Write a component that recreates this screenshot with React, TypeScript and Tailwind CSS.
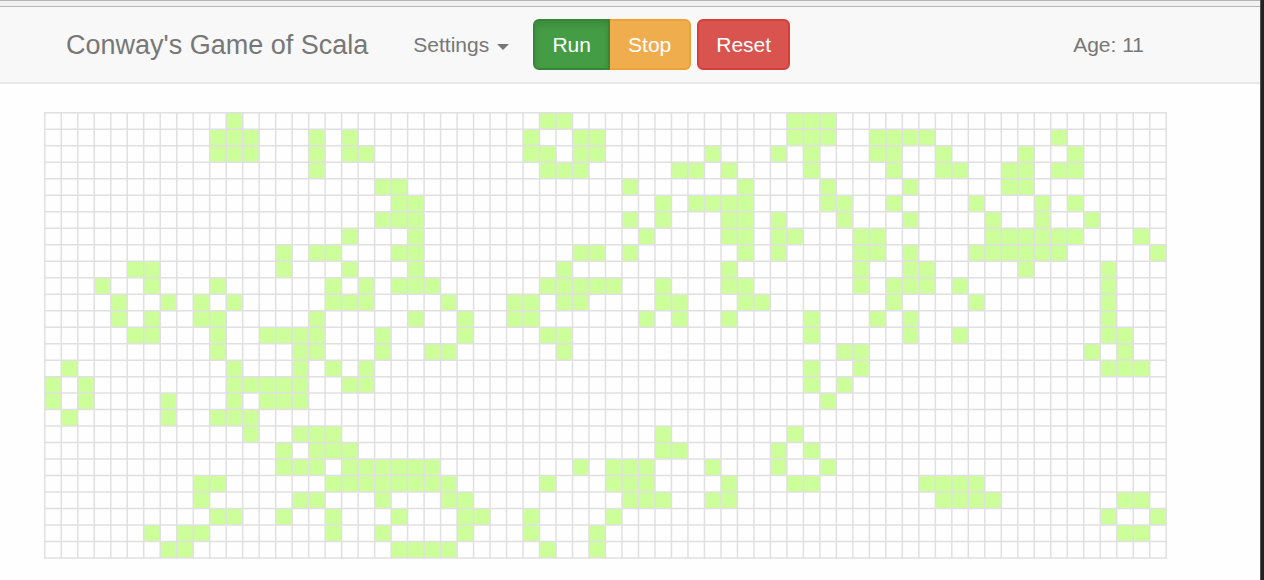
const COLS = 68;
const ROWS = 27;
const CELL = 11;

// Column numbers of the living cells, one entry per row of the board.
const LIVING: number[][] = [
  [11, 30, 31, 45, 46, 47],
  [10, 11, 12, 16, 18, 29, 32, 33, 45, 46, 47, 50, 51, 52, 53, 61],
  [10, 11, 12, 16, 18, 19, 29, 30, 32, 33, 40, 44, 46, 50, 51, 54, 59, 62],
  [16, 30, 31, 32, 38, 39, 41, 46, 51, 54, 55, 58, 59, 61, 62],
  [20, 21, 35, 42, 47, 52, 58, 59],
  [21, 22, 37, 39, 40, 41, 42, 47, 48, 51, 56, 60, 62],
  [20, 21, 22, 35, 37, 41, 42, 44, 48, 52, 57, 60, 63],
  [18, 22, 36, 41, 42, 44, 45, 49, 50, 57, 58, 59, 60, 61, 62, 66],
  [14, 16, 17, 21, 22, 32, 33, 35, 42, 44, 49, 50, 52, 56, 57, 58, 59, 60, 61, 67],
  [5, 6, 14, 18, 22, 31, 41, 49, 52, 53, 59, 64],
  [3, 6, 10, 17, 19, 21, 22, 23, 30, 31, 32, 33, 34, 37, 41, 42, 49, 51, 52, 53, 55, 64],
  [4, 7, 9, 11, 17, 18, 19, 24, 28, 29, 31, 32, 37, 38, 42, 43, 51, 56, 64],
  [4, 6, 9, 10, 16, 22, 25, 28, 29, 36, 38, 41, 46, 50, 52, 64],
  [5, 6, 10, 13, 14, 15, 16, 20, 25, 30, 31, 46, 52, 55, 64, 65],
  [10, 15, 16, 20, 23, 24, 31, 48, 49, 63, 65],
  [1, 11, 15, 17, 19, 46, 49, 64, 65, 66],
  [0, 2, 11, 12, 13, 14, 15, 18, 19, 46, 48],
  [0, 2, 7, 11, 13, 14, 15, 47],
  [1, 7, 10, 11, 12],
  [12, 15, 16, 17, 37, 45],
  [14, 16, 17, 18, 37, 38, 44, 46],
  [14, 15, 16, 18, 19, 20, 21, 22, 23, 32, 34, 35, 36, 40, 44, 47],
  [9, 10, 17, 18, 19, 20, 21, 22, 23, 24, 30, 34, 35, 36, 41, 45, 46, 53, 54, 55, 56],
  [9, 15, 16, 20, 24, 25, 35, 36, 37, 40, 41, 54, 55, 56, 57, 65, 66],
  [10, 11, 14, 17, 21, 25, 26, 29, 34, 64, 67],
  [6, 8, 9, 17, 20, 25, 29, 33, 65, 66],
  [7, 8, 21, 22, 23, 24, 30, 33],
];

function Board() {
  const width = COLS * CELL + 1;
  const height = ROWS * CELL + 1;
  return (
    <svg
      className="block h-auto w-full"
      viewBox={`0 0 ${width} ${height}`}
      role="img"
      aria-label="Game board"
    >
      {LIVING.map((cols, row) =>
        cols.map((col) => (
          <rect
            key={`${row}-${col}`}
            x={col * CELL + 0.5}
            y={row * CELL + 0.5}
            width={CELL}
            height={CELL}
            fill="#ccff99"
          />
        )),
      )}
      <g stroke="#e0e0e0" strokeWidth="1">
        {Array.from({ length: COLS + 1 }, (_, i) => (
          <line key={`c${i}`} x1={i * CELL + 0.5} x2={i * CELL + 0.5} y1="0" y2={height} />
        ))}
        {Array.from({ length: ROWS + 1 }, (_, i) => (
          <line key={`r${i}`} x1="0" x2={width} y1={i * CELL + 0.5} y2={i * CELL + 0.5} />
        ))}
      </g>
    </svg>
  );
}

function Navbar() {
  return (
    <nav className="flex h-[77px] items-center border-b-2 border-[#e7e7e7] bg-[#f8f8f8] pr-[116px] pl-[66px] text-[21px] leading-[30px] whitespace-nowrap text-[#777]">
      <a href="#" className="text-[27px]">
        Conway's Game of Scala
      </a>
      <button type="button" className="ml-[45px] flex items-center gap-2">
        Settings
        <svg className="mt-1 h-[6px] w-3" viewBox="0 0 12 6" fill="currentColor" aria-hidden="true">
          <path d="M0 0h12L6 6z" />
        </svg>
      </button>
      <div className="ml-6 flex">
        <button
          type="button"
          className="h-[51px] w-[77px] rounded-l-md border-2 border-[#398439] bg-[#449d44] text-white shadow-[inset_0_4px_7px_rgba(0,0,0,0.125)]"
        >
          Run
        </button>
        <button
          type="button"
          className="h-[51px] w-[81px] rounded-r-md border-2 border-l-0 border-[#eea236] bg-[#f0ad4e] text-white"
        >
          Stop
        </button>
      </div>
      <button
        type="button"
        className="ml-[6px] h-[51px] w-[93px] rounded-md border-2 border-[#d43f3a] bg-[#d9534f] text-white"
      >
        Reset
      </button>
      <p className="ml-auto">Age: 11</p>
    </nav>
  );
}

export default function App() {
  return (
    <div className="flex min-h-screen bg-[#222] font-['Liberation_Sans',Arial,sans-serif]">
      <div className="flex min-w-0 grow flex-col border-r border-[#555] bg-[#fefefe]">
        <div className="h-[7px] border-y border-[#b4b4b4] bg-[#f1f1f1]" />
        <Navbar />
        <main className="pt-7 pr-[93px] pl-11">
          <Board />
        </main>
      </div>
      <div className="w-[3px] shrink-0" />
    </div>
  );
}
